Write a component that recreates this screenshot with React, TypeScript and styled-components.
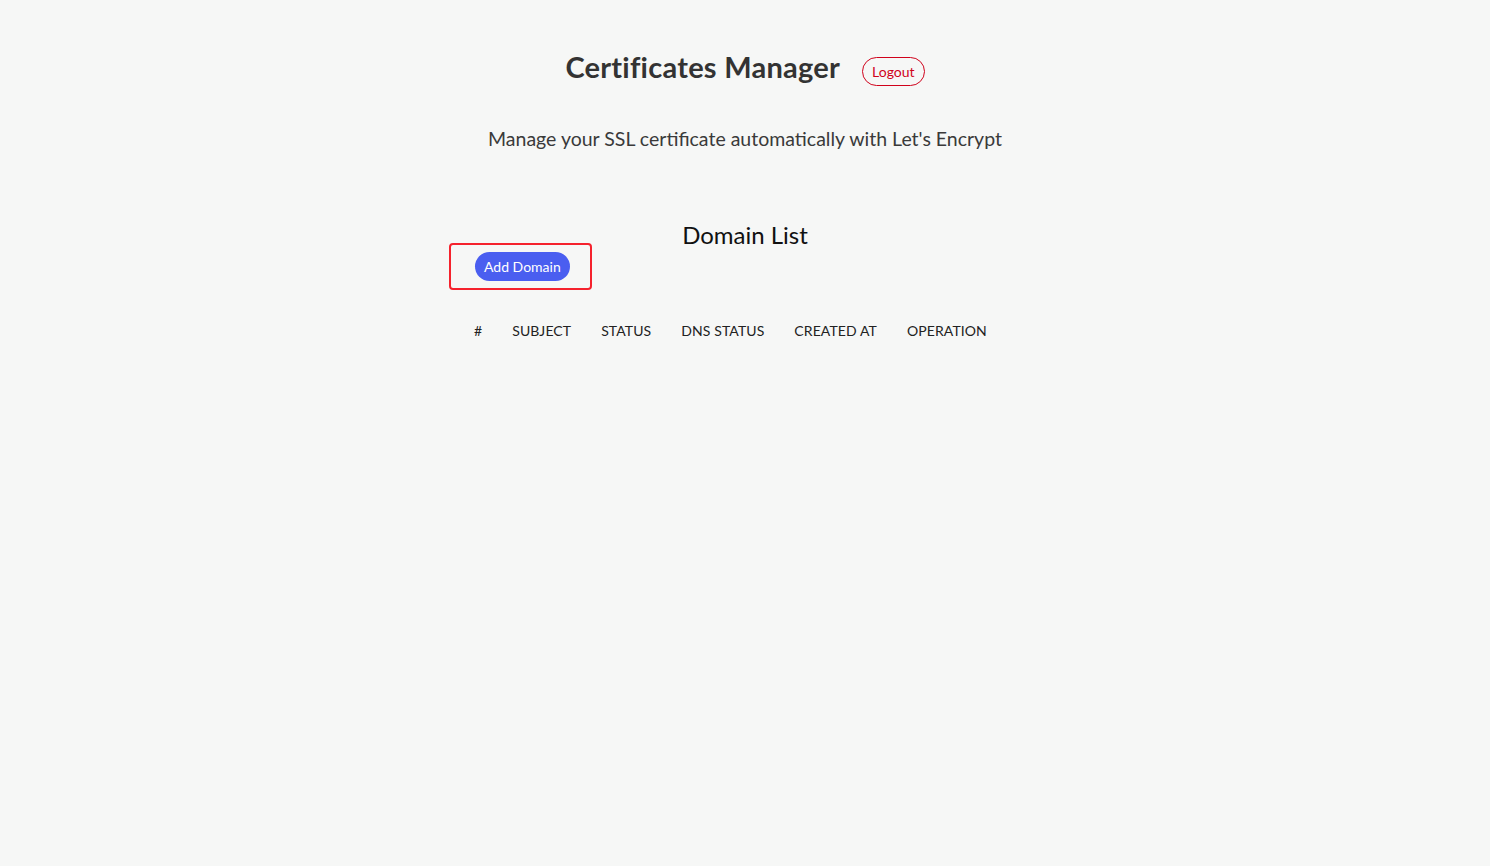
import React from "react";
import styled, { createGlobalStyle } from "styled-components";

const GlobalStyle = createGlobalStyle`
  html, body { margin: 0; padding: 0; background: #f6f7f6; }
  body { font-family: Lato, "Open Sans", sans-serif; color: #333; }
`;

const Page = styled.div`
  min-height: 866px;
  display: flex;
  flex-direction: column;
  align-items: center;
  padding-top: 50px;
  box-sizing: border-box;
`;

const TitleRow = styled.div`
  display: flex;
  align-items: center;
  gap: 22px;
  height: 34px;
`;

const Title = styled.h1`
  margin: 0;
  font-size: 29px;
  font-weight: 700;
  color: #333;
  line-height: 34px;
  letter-spacing: 0.25px;
`;

const LogoutButton = styled.button`
  font-family: inherit;
  font-size: 14px;
  color: #d0021b;
  background: transparent;
  border: 1px solid #d0021b;
  border-radius: 15px;
  height: 29px;
  padding: 0 9px;
  margin-top: 9px;
  cursor: pointer;
`;

const Subtitle = styled.p`
  margin: 43px 0 0;
  font-size: 19.5px;
  line-height: 24px;
  color: #3a3a3a;
`;

const Section = styled.section`
  width: 594px;
  margin-top: 70px;
`;

const SectionTitle = styled.h2`
  margin: 0;
  font-size: 24px;
  font-weight: 400;
  line-height: 28px;
  color: #111;
  text-align: center;
`;

const Annotated = styled.div`
  display: inline-block;
  border: 2px solid #f5222d;
  border-radius: 4px;
  padding: 7px 20px 7px 24px;
  margin: -6px 0 0 1px;
`;

const PrimaryButton = styled.button`
  display: block;
  font-family: inherit;
  font-size: 14px;
  color: #fff;
  background: #4a5ef0;
  border: none;
  border-radius: 15px;
  height: 29px;
  padding: 0 9px;
  cursor: pointer;
`;

const Table = styled.table`
  border-collapse: collapse;
  margin: 24px 0 0 11px;
`;

const Th = styled.th`
  padding: 8px 15px;
  font-size: 14px;
  font-weight: 400;
  color: #222;
  text-transform: uppercase;
  text-align: left;
  letter-spacing: 0.1px;
`;

const columns = ["#", "Subject", "Status", "DNS Status", "Created At", "Operation"];

export default function App() {
  return (
    <>
      <GlobalStyle />
      <Page>
        <TitleRow>
          <Title>Certificates Manager</Title>
          <LogoutButton>Logout</LogoutButton>
        </TitleRow>
        <Subtitle>Manage your SSL certificate automatically with Let's Encrypt</Subtitle>
        <Section>
          <SectionTitle>Domain List</SectionTitle>
          <Annotated>
            <PrimaryButton>Add Domain</PrimaryButton>
          </Annotated>
          <Table>
            <thead>
              <tr>
                {columns.map((c) => (
                  <Th key={c}>{c}</Th>
                ))}
              </tr>
            </thead>
            <tbody />
          </Table>
        </Section>
      </Page>
    </>
  );
}
